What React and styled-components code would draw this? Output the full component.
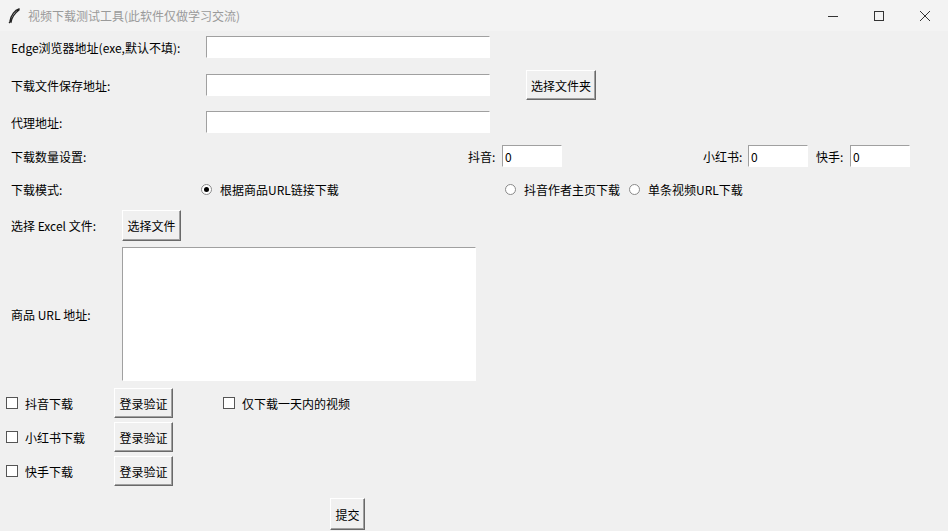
import React from "react";
import styled, { createGlobalStyle } from "styled-components";

const G = createGlobalStyle`
  html,body{margin:0;padding:0;background:#f0f0f0;}
  body{font-family:"Noto Sans CJK SC","Liberation Sans",sans-serif;font-size:12px;color:#000;}
`;
const Win = styled.div`width:948px;height:531px;background:#f0f0f0;overflow:hidden;display:flex;flex-direction:column;`;
const TitleBar = styled.div`height:31px;display:flex;align-items:center;background:#f3f3f3;flex-shrink:0;`;
const TitleText = styled.span`color:#9a9a9a;font-size:12px;margin-left:6px;`;
const Ctrls = styled.div`margin-left:auto;display:flex;`;
const Ctrl = styled.div`width:46px;height:31px;display:flex;align-items:center;justify-content:center;`;
const Body = styled.div`display:flex;flex-direction:column;`;
const Row = styled.div`display:flex;align-items:center;height:${p=>p.h}px;margin-top:${p=>p.mt||0}px;`;
const Cell = styled.div`width:${p=>p.w}px;flex-shrink:0;display:flex;align-items:center;`;
const Label = styled.span`white-space:nowrap;`;
const Entry = styled.div`width:${p=>p.w}px;height:22px;background:#fff;border:1px solid #a0a0a0;border-right-color:#fff;border-bottom-color:#fff;box-sizing:border-box;padding-left:2px;display:flex;align-items:center;`;
const Area = styled.div`width:354px;height:134px;background:#fff;border:1px solid #a0a0a0;border-right-color:#fff;border-bottom-color:#fff;box-sizing:border-box;`;
const Btn = styled.div`width:${p=>p.w}px;height:${p=>p.h||30}px;box-sizing:border-box;background:#f0f0f0;border:1px solid;border-color:#fff #696969 #696969 #fff;box-shadow:inset -1px -1px 0 #a0a0a0;display:flex;align-items:center;justify-content:center;`;
const Radio = styled.span`width:9px;height:9px;border-radius:50%;border:1px solid #8a8a8a;background:#fff;display:inline-flex;align-items:center;justify-content:center;margin-right:8px;&::after{content:"";width:5px;height:5px;border-radius:50%;background:${p=>p.on?"#000":"transparent"};}`;
const Check = styled.span`width:10px;height:10px;border:1px solid #555;background:#fff;display:inline-block;margin-right:7px;`;

export default function App(){
  return <Win><G/>
    <TitleBar>
      <svg width="14" height="16" viewBox="0 0 14 16" style={{marginLeft:8}}><path d="M11 1C7 2 3 7 2 13l1 1c1-5 4-9 8-12z" fill="#fff" stroke="#222" strokeWidth="1.3"/><path d="M3 13L1 15" stroke="#222" strokeWidth="1.2"/></svg>
      <TitleText>视频下载测试工具(此软件仅做学习交流)</TitleText>
      <Ctrls>
        <Ctrl><svg width="10" height="10"><path d="M0 5.5h10" stroke="#333"/></svg></Ctrl>
        <Ctrl><svg width="10" height="10"><rect x=".5" y=".5" width="9" height="9" fill="none" stroke="#333"/></svg></Ctrl>
        <Ctrl><svg width="10" height="10"><path d="M0 0l10 10M10 0L0 10" stroke="#333"/></svg></Ctrl>
      </Ctrls>
    </TitleBar>
    <Body>
      <Row h={32}><Cell w={11}/><Cell w={195}><Label>Edge浏览器地址(exe,默认不填):</Label></Cell><Entry w={284}/></Row>
      <Row h={40} mt={2}><Cell w={11}/><Cell w={195}><Label>下载文件保存地址:</Label></Cell><Entry w={284}/><Cell w={36}/><Btn w={70}>选择文件夹</Btn></Row>
      <Row h={34}><Cell w={11}/><Cell w={195}><Label>代理地址:</Label></Cell><Entry w={284}/></Row>
      <Row h={34}><Cell w={11}/><Cell w={457}><Label>下载数量设置:</Label></Cell><Cell w={34}><Label>抖音:</Label></Cell><Entry w={60}>0</Entry><Cell w={141}/><Cell w={45}><Label>小红书:</Label></Cell><Entry w={60}>0</Entry><Cell w={8}/><Cell w={34}><Label>快手:</Label></Cell><Entry w={60}>0</Entry></Row>
      <Row h={32}><Cell w={11}/><Cell w={190}><Label>下载模式:</Label></Cell><Cell w={304}><Radio on/><Label>根据商品URL链接下载</Label></Cell><Cell w={124}><Radio/><Label>抖音作者主页下载</Label></Cell><Cell w={150}><Radio/><Label>单条视频URL下载</Label></Cell></Row>
      <Row h={36} mt={2}><Cell w={11}/><Cell w={111}><Label>选择 Excel 文件:</Label></Cell><Btn w={59} h={31}>选择文件</Btn></Row>
      <Row h={134} mt={4}><Cell w={11}/><Cell w={111}><Label>商品 URL 地址:</Label></Cell><Area/></Row>
      <Row h={34} mt={5}><Cell w={6}/><Cell w={108}><Check/><Label>抖音下载</Label></Cell><Btn w={59} h={30}>登录验证</Btn><Cell w={50}/><Cell w={200}><Check/><Label>仅下载一天内的视频</Label></Cell></Row>
      <Row h={34}><Cell w={6}/><Cell w={108}><Check/><Label>小红书下载</Label></Cell><Btn w={59} h={30}>登录验证</Btn></Row>
      <Row h={34}><Cell w={6}/><Cell w={108}><Check/><Label>快手下载</Label></Cell><Btn w={59} h={30}>登录验证</Btn></Row>
      <Row h={32} mt={10}><Cell w={330}/><Btn w={35} h={32}>提交</Btn></Row>
    </Body>
  </Win>;
}
